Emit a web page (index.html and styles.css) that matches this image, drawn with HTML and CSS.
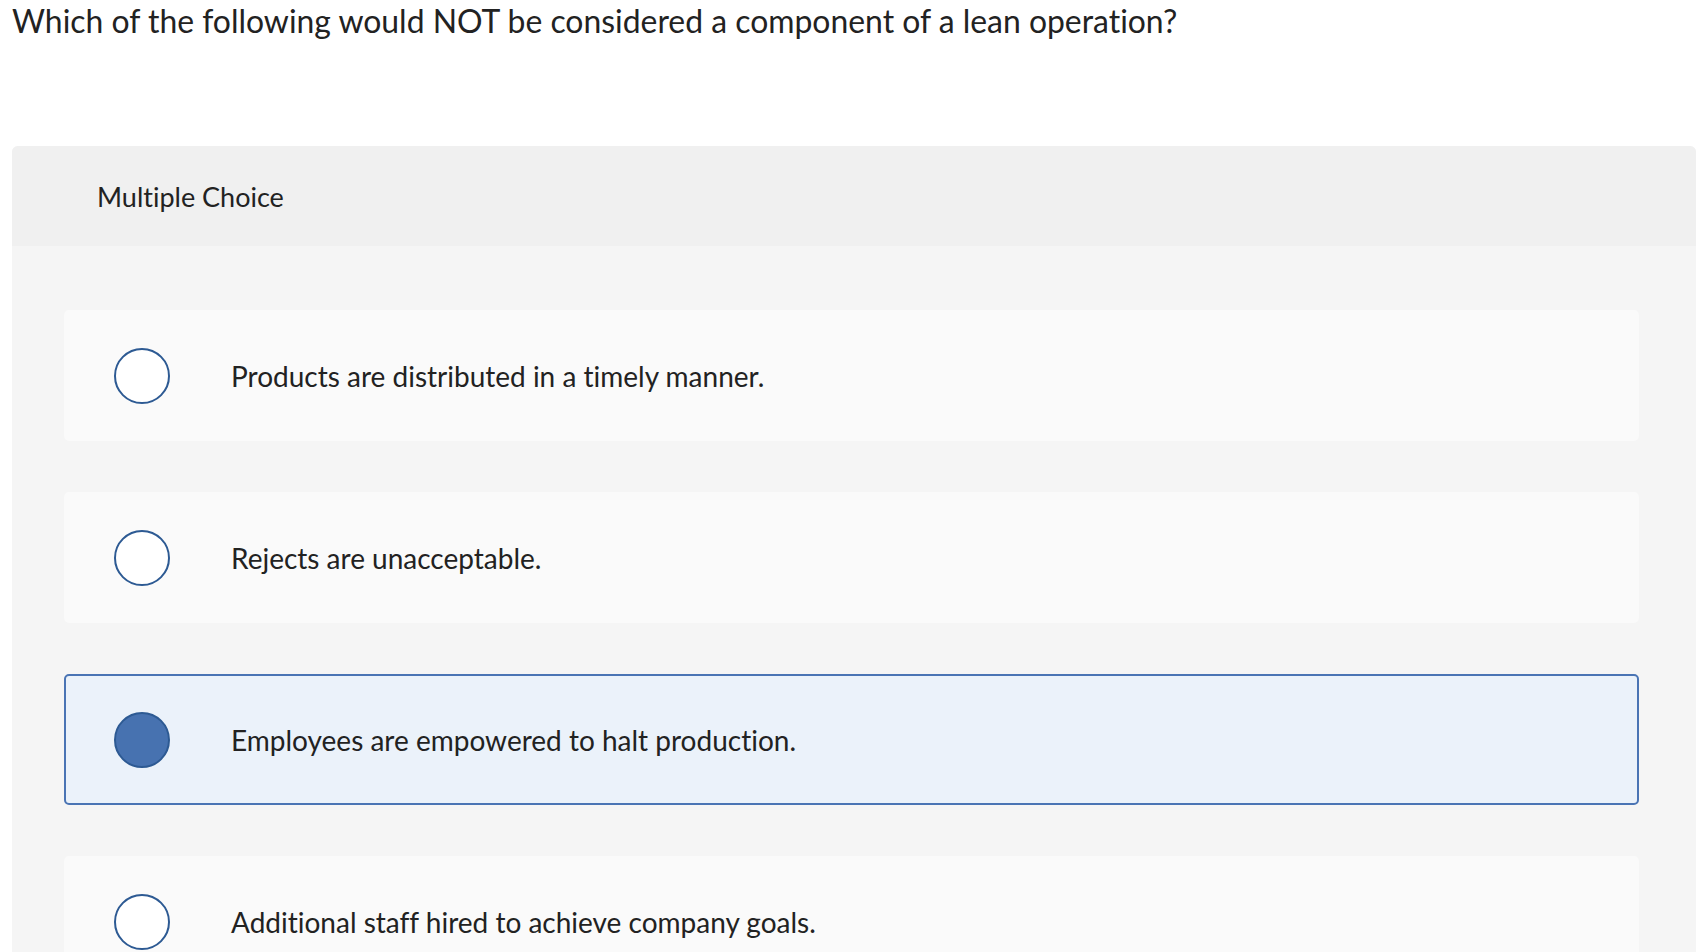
FILE: index.html
```html
<!DOCTYPE html>
<html lang="en">
<head>
<meta charset="utf-8">
<title>Multiple Choice</title>
<link rel="stylesheet" href="styles.css">
</head>
<body>
<div class="page">
  <p class="question">Which of the following would NOT be considered a component of a lean operation?</p>
  <section class="panel">
    <header class="panel-head">Multiple Choice</header>
    <div class="panel-body">
      <div class="option"><span class="radio"></span><span class="label">Products are distributed in a timely manner.</span></div>
      <div class="option"><span class="radio"></span><span class="label">Rejects are unacceptable.</span></div>
      <div class="option selected"><span class="radio"></span><span class="label">Employees are empowered to halt production.</span></div>
      <div class="option"><span class="radio"></span><span class="label">Additional staff hired to achieve company goals.</span></div>
    </div>
  </section>
</div>
</body>
</html>
```
FILE: styles.css
```css
html, body {
  margin: 0;
  padding: 0;
  background: #ffffff;
}
body {
  font-family: Lato, "Open Sans", "Liberation Sans", sans-serif;
  font-variant-ligatures: none;
  color: #222222;
  overflow: hidden;
  height: 952px;
}
.page {
  padding: 0 12px;
}
.question {
  margin: 0;
  padding-top: 2px;
  font-size: 31.9px;
  line-height: 38px;
  height: 146px;
  box-sizing: border-box;
}
.panel {
  background: #f5f5f5;
  border-radius: 6px 6px 0 0;
  overflow: hidden;
}
.panel-head {
  background: #f0f0f0;
  height: 100px;
  display: flex;
  align-items: center;
  padding-left: 85px;
  font-size: 27px;
}
.panel-body {
  padding: 64px 57px 40px 52px;
  display: flex;
  flex-direction: column;
  gap: 51px;
}
.option {
  background: #fafafa;
  border-radius: 5px;
  height: 131px;
  box-sizing: border-box;
  border: 2px solid transparent;
  display: flex;
  align-items: center;
  padding-left: 48px;
  gap: 61px;
  font-size: 28px;
}
.option.selected {
  background: #ebf2fa;
  border-color: #4a74b4;
}
.radio {
  flex: none;
  width: 56px;
  height: 56px;
  box-sizing: border-box;
  border-radius: 50%;
  border: 2px solid #2d5a93;
  background: #ffffff;
}
.option.selected .radio {
  background: #4772b0;
  border-color: #2d5a93;
}
```
